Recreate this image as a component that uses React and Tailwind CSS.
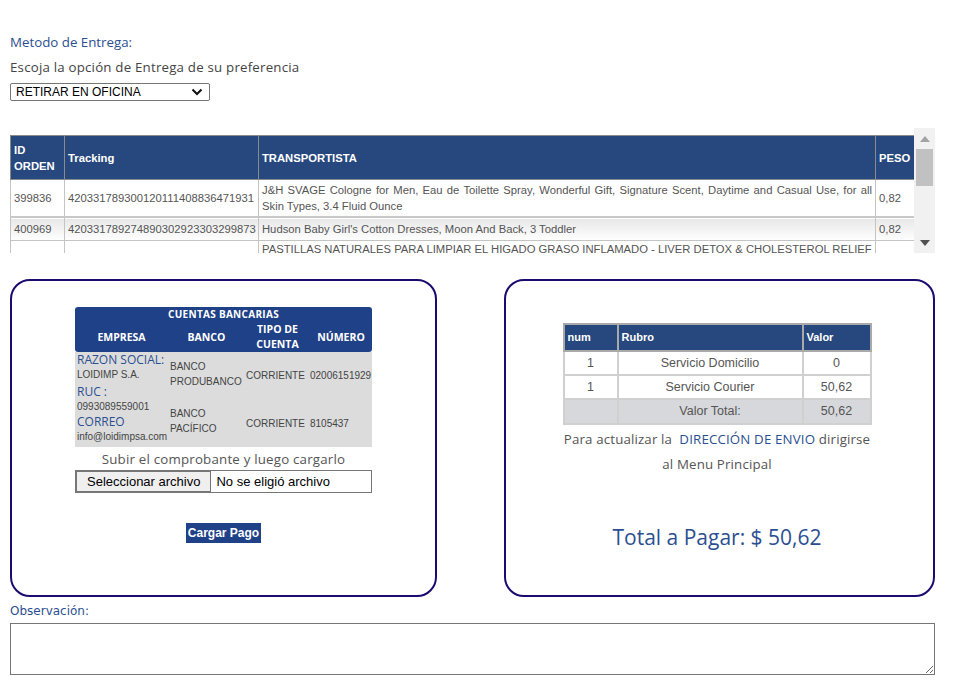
import React from "react";

const MONT = "font-['Open_Sans',sans-serif]";
const ARIAL = "font-['Liberation_Sans',Arial,sans-serif]";

function Chevron() {
  return (
    <svg width="12" height="8" viewBox="0 0 12 8" className="shrink-0">
      <path d="M1.5 1.5 L6 6 L10.5 1.5" fill="none" stroke="#111" strokeWidth="2" />
    </svg>
  );
}

function OrdersTable() {
  const th = "border border-[#8a8a8a] text-left align-middle px-[3px] font-bold text-white text-[11.25px] leading-[16px]";
  const td = "border border-[#c4c4c4] px-[3px] text-[11.25px] leading-[16px] text-[#555] align-middle";
  return (
    <div className="flex h-[125px] mt-[27px] w-[925px]">
      <div className="w-[904px] h-full overflow-hidden pt-[7px]">
        <table className={`w-[904px] border-collapse table-fixed ${ARIAL}`}>
          <colgroup>
            <col className="w-[54px]" />
            <col className="w-[194px]" />
            <col className="w-[617px]" />
            <col className="w-[39px]" />
          </colgroup>
          <thead>
            <tr className="bg-[#27487e] h-[44px]">
              <th className={th}>ID<br />ORDEN</th>
              <th className={th}>Tracking</th>
              <th className={th}>TRANSPORTISTA</th>
              <th className={th}>PESO</th>
            </tr>
          </thead>
          <tbody>
            <tr className="h-[37px]">
              <td className={td}>399836</td>
              <td className={td}>420331789300120111408836471931</td>
              <td className={`${td} text-justify`}>
                J&amp;H SVAGE Cologne for Men, Eau de Toilette Spray, Wonderful Gift, Signature Scent, Daytime and Casual Use, for all Skin Types, 3.4 Fluid Ounce
              </td>
              <td className={td}>0,82</td>
            </tr>
            <tr className="h-[24px] bg-linear-to-b from-[#e8e8e8] to-white border-t-2 border-t-[#c8c8c8]">
              <td className={td}>400969</td>
              <td className={td}>420331789274890302923303299873</td>
              <td className={`${td} text-justify`}>Hudson Baby Girl's Cotton Dresses, Moon And Back, 3 Toddler</td>
              <td className={td}>0,82</td>
            </tr>
            <tr className="h-[37px]">
              <td className={`${td} align-top`}></td>
              <td className={`${td} align-top`}></td>
              <td className={`${td} align-top whitespace-nowrap overflow-hidden`}>
                PASTILLAS NATURALES PARA LIMPIAR EL HIGADO GRASO INFLAMADO - LIVER DETOX &amp; CHOLESTEROL RELIEF
              </td>
              <td className={`${td} align-top`}></td>
            </tr>
          </tbody>
        </table>
      </div>
      <div className="w-[21px] h-full bg-[#f1f1f1] flex flex-col items-center">
        <div className="h-[21px] flex items-center justify-center">
          <svg width="10" height="6" viewBox="0 0 10 6"><path d="M5 0 L10 6 L0 6 Z" fill="#a3a3a3" /></svg>
        </div>
        <div className="w-[17px] h-[37px] bg-[#c1c1c1]" />
        <div className="flex-1" />
        <div className="h-[21px] flex items-center justify-center">
          <svg width="10" height="6" viewBox="0 0 10 6"><path d="M0 0 L10 0 L5 6 Z" fill="#505050" /></svg>
        </div>
      </div>
    </div>
  );
}

function BankTable() {
  const hth = `bg-[#1f4188] text-white font-bold text-[10.5px] leading-[15px] text-center align-middle ${MONT}`;
  const lbl = `text-[#2c4f91] text-[12px] leading-[15px] ${MONT}`;
  const sm = `text-[10px] leading-[15px] text-[#444] ${ARIAL}`;
  return (
    <table className="w-[297px] border-collapse table-fixed">
      <colgroup>
        <col className="w-[93px]" />
        <col className="w-[77px]" />
        <col className="w-[65px]" />
        <col className="w-[62px]" />
      </colgroup>
      <thead>
        <tr className="h-[13px]">
          <th colSpan={4} className={`${hth} text-[10px] leading-[13px] tracking-[0.3px] rounded-t-[3px]`}>CUENTAS BANCARIAS</th>
        </tr>
        <tr className="h-[30px]">
          <th className={`${hth} rounded-bl-[3px]`}>EMPRESA</th>
          <th className={hth}>BANCO</th>
          <th className={hth}>TIPO DE<br />CUENTA</th>
          <th className={`${hth} rounded-br-[3px]`}>NÚMERO</th>
        </tr>
      </thead>
      <tbody className="bg-[#dcdcdc]">
        <tr className="h-[47px]">
          <td rowSpan={2} className="align-top pl-[2px]">
            <div className={lbl}>RAZON SOCIAL:</div>
            <div className={sm}>LOIDIMP S.A.</div>
            <div className={`${lbl} mt-[2px]`}>RUC :</div>
            <div className={sm}>0993089559001</div>
            <div className={lbl}>CORREO</div>
            <div className={sm}>info@loidimpsa.com</div>
          </td>
          <td className={`${sm} pl-[2px] align-middle`}><div className="-mt-[4px]">BANCO<br />PRODUBANCO</div></td>
          <td className={`${sm} pl-[1px] align-middle whitespace-nowrap`}>CORRIENTE</td>
          <td className={`${sm} align-middle whitespace-nowrap`}>02006151929</td>
        </tr>
        <tr className="h-[48px]">
          <td className={`${sm} pl-[2px] align-middle`}><div className="-mt-[4px]">BANCO<br />PACÍFICO</div></td>
          <td className={`${sm} pl-[1px] align-middle whitespace-nowrap`}>CORRIENTE</td>
          <td className={`${sm} align-middle whitespace-nowrap`}>8105437</td>
        </tr>
      </tbody>
    </table>
  );
}

function CostTable() {
  const th = `border-2 border-[#a9a9a9] bg-[#27487e] text-white font-bold text-[11px] text-left px-[3px] align-middle ${ARIAL}`;
  const td = `border-2 border-[#d0d0d0] text-[12.5px] text-[#555] text-center align-middle ${ARIAL}`;
  return (
    <table className="w-[307px] border-collapse table-fixed border-2 border-[#a9a9a9]">
      <colgroup>
        <col className="w-[54px]" />
        <col className="w-[185px]" />
        <col className="w-[68px]" />
      </colgroup>
      <thead>
        <tr className="h-[27px]">
          <th className={th}>num</th>
          <th className={th}>Rubro</th>
          <th className={th}>Valor</th>
        </tr>
      </thead>
      <tbody>
        <tr className="h-[24px]">
          <td className={td}>1</td>
          <td className={td}>Servicio Domicilio</td>
          <td className={td}>0</td>
        </tr>
        <tr className="h-[24px]">
          <td className={td}>1</td>
          <td className={td}>Servicio Courier</td>
          <td className={td}>50,62</td>
        </tr>
        <tr className="h-[25px] bg-[#d6d8db]">
          <td className={`${td} border-[#bbb]`}></td>
          <td className={`${td} border-[#bbb]`}>Valor Total:</td>
          <td className={`${td} border-[#bbb]`}>50,62</td>
        </tr>
      </tbody>
    </table>
  );
}

export default function App() {
  return (
    <div className="w-[961px] h-[688px] bg-white overflow-hidden">
      <div className="pl-[10px] pt-[34px]">
        <p className={`text-[13.3px] leading-[16px] text-[#2c4f91] ${MONT}`}>Metodo de Entrega:</p>
        <p className={`mt-[9px] text-[13.3px] leading-[16px] tracking-[0.2px] text-[#444] ${MONT}`}>Escoja la opción de Entrega de su preferencia</p>
        <div className={`mt-[8px] w-[200px] h-[18px] border border-[#767676] rounded-[2px] flex items-center justify-between pl-[5px] pr-[6px] text-[12px] text-black ${ARIAL}`}>
          <span>RETIRAR EN OFICINA</span>
          <Chevron />
        </div>

        <OrdersTable />

        <div className="mt-[26px] flex w-[925px] justify-between">
          <div className="w-[427px] h-[318px] border-2 border-[#1c0a70] rounded-[20px] flex flex-col items-center pt-[26px]">
            <BankTable />
            <p className={`mt-[4px] text-[13.3px] leading-[16px] tracking-[0.2px] text-[#555] ${MONT}`}>Subir el comprobante y luego cargarlo</p>
            <div className={`mt-[3px] w-[297px] h-[23px] border border-[#767676] flex items-center ${ARIAL} text-[13px] text-black`}>
              <div className="h-[21px] px-[10px] bg-[#efefef] border border-[#767676] flex items-center">Seleccionar archivo</div>
              <span className="ml-[5px]">No se eligió archivo</span>
            </div>
            <div className={`mt-[30px] h-[20px] px-[2px] bg-[#1f4188] text-white font-bold text-[12px] flex items-center ${ARIAL}`}>Cargar Pago</div>
          </div>

          <div className="w-[431px] h-[318px] border-2 border-[#1c0a70] rounded-[20px] flex flex-col items-center pt-[42px] pr-[5px]">
            <CostTable />
            <p className={`mt-[2px] text-[13.3px] leading-[25px] tracking-[0.15px] text-[#555] text-center ${MONT}`}>
              Para actualizar la&nbsp; <span className="text-[#2c4f91]">DIRECCIÓN DE ENVIO</span> dirigirse
              <br />al Menu Principal
            </p>
            <p className={`mt-[47px] text-[21px] leading-[26px] text-[#2c4f91] ${MONT}`}>Total a Pagar: $ 50,62</p>
          </div>
        </div>

        <p className="mt-[7px] text-[12px] leading-[14px] text-[#2c4f91] font-['DejaVu_Sans',Tahoma,sans-serif]">Observación:</p>
        <textarea className="mt-[5px] block w-[925px] h-[52px] border border-[#767676] bg-white" />
      </div>
    </div>
  );
}
